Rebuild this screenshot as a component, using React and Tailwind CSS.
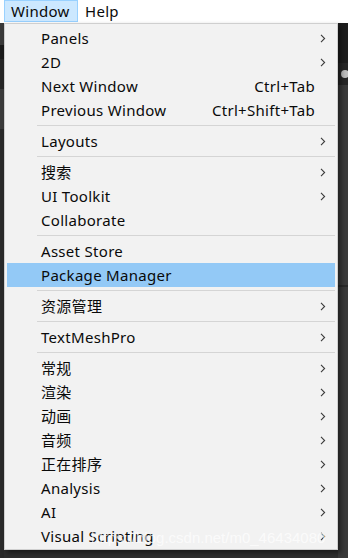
import React from 'react';

const font = { fontFamily: '"Noto Sans", "Noto Sans CJK SC", sans-serif' };

const items = [
  { label: 'Panels', sub: true },
  { label: '2D', sub: true },
  { label: 'Next Window', shortcut: 'Ctrl+Tab' },
  { label: 'Previous Window', shortcut: 'Ctrl+Shift+Tab' },
  { sep: true },
  { label: 'Layouts', sub: true },
  { sep: true },
  { label: '搜索', sub: true },
  { label: 'UI Toolkit', sub: true },
  { label: 'Collaborate' },
  { sep: true },
  { label: 'Asset Store' },
  { label: 'Package Manager', active: true },
  { sep: true },
  { label: '资源管理', sub: true },
  { sep: true },
  { label: 'TextMeshPro', sub: true },
  { sep: true },
  { label: '常规', sub: true },
  { label: '渲染', sub: true },
  { label: '动画', sub: true },
  { label: '音频', sub: true },
  { label: '正在排序', sub: true },
  { label: 'Analysis', sub: true },
  { label: 'AI', sub: true },
  { label: 'Visual Scripting', sub: true },
];

const Chevron = () => (
  <svg width="6" height="9" viewBox="0 0 6 9" className="block">
    <path d="M1 0.8 L4.6 4.5 L1 8.2" fill="none" stroke="#3c3c3c" strokeWidth="1.1" />
  </svg>
);

const MenuRow = ({ item }) => {
  if (item.sep) {
    return (
      <div className="h-[7px] flex items-center pl-[30px]">
        <div className="h-px w-full bg-[#d5d5d5]" />
      </div>
    );
  }
  return (
    <div
      className={`h-[24px] flex items-center pl-[34px] text-[15px] tracking-[0.3px] text-[#0a0a0a] ${
        item.active ? 'bg-[#93c9f6]' : ''
      }`}
    >
      <span className="flex-1 whitespace-nowrap">{item.label}</span>
      {item.shortcut && <span className="whitespace-nowrap">{item.shortcut}</span>}
      <span className="w-[20px] shrink-0 flex items-center pl-[5px]">{item.sub && <Chevron />}</span>
    </div>
  );
};

export default function App() {
  return (
    <div className="w-[348px] h-[558px] relative overflow-hidden bg-[#2e2e2e]" style={font}>
      {/* Menu bar */}
      <div className="h-[23px] bg-white flex items-start pl-[4px] text-[15px] tracking-[0.3px] text-[#0a0a0a]">
        <div className="h-[22px] w-[74px] border border-[#99d1ff] bg-[#cce8ff] flex items-center pl-[6px] leading-none">
          Window
        </div>
        <div className="h-[22px] flex items-center pl-[7px] leading-none">Help</div>
      </div>

      {/* Editor behind + dropdown */}
      <div className="flex h-[535px]">
        <div className="w-[4px] shrink-0 flex flex-col">
          <div className="h-[22px] bg-[#3a3a3a]" />
          <div className="h-[14px] bg-[#1b1b1b]" />
          <div className="h-[30px] bg-[#262626]" />
          <div className="h-[40px] bg-[#3b3b3b]" />
          <div className="flex-1 bg-[#2a2a2a]" />
        </div>

        <div className="shrink-0 flex flex-col">
          <div className="w-[334px] h-[527px] bg-[#f2f2f2] border border-[#cfcfcf] pt-[2px] pb-[1px] px-[2px] shadow-[3px_3px_5px_rgba(0,0,0,0.45)] relative z-10">
            {items.map((item, i) => (
              <MenuRow key={i} item={item} />
            ))}
          </div>
          <div className="flex-1" />
        </div>

        <div className="flex-1 min-w-0 flex flex-col">
          <div className="h-[40px] bg-[#1d1d1d]" />
          <div className="h-[22px] bg-[#262626] flex items-center">
            <div className="w-[8px] h-[8px] shrink-0 rounded-full bg-[#bdbdbd] ml-[3px]" />
          </div>
          <div className="h-[200px] bg-[#3a3a3a]" />
          <div className="h-[2px] bg-[#2a2a2a]" />
          <div className="flex-1 bg-[#393939]" />
        </div>
      </div>

      {/* Watermark */}
      <div
        className="absolute left-[91px] top-[527px] z-20 text-[15px] text-white/70 whitespace-nowrap pointer-events-none"
        style={{ fontFamily: '"Liberation Sans", sans-serif' }}
      >
        https://blog.csdn.net/m0_46434080
      </div>
    </div>
  );
}
